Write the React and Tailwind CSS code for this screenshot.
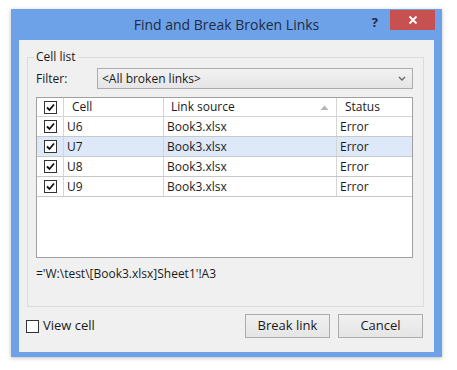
import React from "react";

const font = { fontFamily: '"Open Sans", "Noto Sans", sans-serif' };

function Check({ checked = true }) {
  return (
    <div className="w-[13px] h-[13px] border border-[#333] bg-white flex items-center justify-center">
      {checked && (
        <svg width="11" height="11" viewBox="0 0 11 11">
          <path d="M2 5.5 L4.5 8 L9 2.5" fill="none" stroke="#111" strokeWidth="1.8" />
        </svg>
      )}
    </div>
  );
}

const rows = ["U6", "U7", "U8", "U9"];

export default function App() {
  return (
    <div className="w-[457px] h-[370px] bg-white pt-[9px] pl-[11px]" style={font}>
      <div className="w-[431px] h-[348px] bg-[#6ea2e8] flex flex-col shadow-[0_1px_4px_rgba(0,0,0,0.25)]">
        <div className="h-[31px] grid grid-cols-[1fr_auto_1fr] items-start">
          <div />
          <div className="text-[14px] text-[#1e2b45] leading-[20px] pt-[6px]">Find and Break Broken Links</div>
          <div className="flex justify-end items-start pt-[1px] pr-[7px]">
            <div className="text-[13px] font-bold text-[#1e2b45] leading-[16px] pt-[4px] mr-[12px]">?</div>
            <div className="w-[45px] h-[20px] bg-[#c75050] flex items-center justify-center">
              <svg width="10" height="10" viewBox="0 0 10 10">
                <path d="M1.5 1.5 L8.5 8.5 M8.5 1.5 L1.5 8.5" stroke="#fff" strokeWidth="1.8" />
              </svg>
            </div>
          </div>
        </div>
        <div className="mx-[8px] mb-[5px] flex-1 bg-[#f0f0f0] flex flex-col text-[12px] text-[#1a1a1a]">
          <fieldset className="ml-[8px] mr-[10px] mt-[9px] h-[258px] border border-[#dcdcdc] pl-[8px] pr-[10px]">
            <legend className="ml-[-2px] px-[2px] leading-[16px]">Cell list</legend>
            <div className="flex items-center mt-[3px] h-[21px]">
              <div className="w-[61px]">Filter:</div>
              <div className="flex-1 h-[21px] border border-[#acacac] bg-gradient-to-b from-[#f2f2f2] to-[#e5e5e5] flex items-center pl-[4px] pr-[6px]">
                <span className="flex-1">&lt;All broken links&gt;</span>
                <svg width="8" height="5" viewBox="0 0 8 5">
                  <path d="M1 1 L4 4 L7 1" fill="none" stroke="#666" strokeWidth="1.3" />
                </svg>
              </div>
            </div>
            <div className="mt-[8px] h-[161px] border border-[#a0a0a0] bg-white">
              <div className="flex h-[19px] border-b border-[#d5d5d5] items-center">
                <div className="w-[27px] h-full flex items-center justify-center border-r border-[#d5d5d5]">
                  <Check />
                </div>
                <div className="w-[100px] h-full flex items-center pl-[8px] border-r border-[#d5d5d5]">Cell</div>
                <div className="w-[173px] h-full flex items-center pl-[7px] pr-[7px] border-r border-[#d5d5d5]">
                  <span className="flex-1">Link source</span>
                  <svg width="9" height="5" viewBox="0 0 9 5">
                    <path d="M0.5 5 L4.5 0.5 L8.5 5 Z" fill="#b5b5b5" />
                  </svg>
                </div>
                <div className="flex-1 h-full flex items-center pl-[8px]">Status</div>
              </div>
              {rows.map((r) => (
                <div
                  key={r}
                  className={`flex h-[20px] border-b border-[#c8c8c8] items-center ${r === "U7" ? "bg-[#dde8f8]" : ""}`}
                >
                  <div className="w-[27px] h-full flex items-center justify-center border-r border-[#d5d5d5]">
                    <Check />
                  </div>
                  <div className="w-[100px] h-full flex items-center pl-[3px] border-r border-[#d5d5d5]">{r}</div>
                  <div className="w-[173px] h-full flex items-center pl-[3px] border-r border-[#d5d5d5]">Book3.xlsx</div>
                  <div className="flex-1 h-full flex items-center pl-[3px]">Error</div>
                </div>
              ))}
            </div>
            <div className="mt-[8px] leading-[16px]">='W:\test\[Book3.xlsx]Sheet1'!A3</div>
          </fieldset>
          <div className="flex items-center mt-[7px] pl-[7px] pr-[11px]">
            <div className="flex items-center gap-[4px] flex-1">
              <div className="w-[13px] h-[13px] border border-[#333] bg-white" />
              <span className="text-[13px]">View cell</span>
            </div>
            <div className="w-[85px] h-[24px] border border-[#acacac] bg-gradient-to-b from-[#f0f0f0] to-[#e5e5e5] flex items-center justify-center text-[13px]">
              Break link
            </div>
            <div className="w-[85px] h-[24px] ml-[8px] border border-[#acacac] bg-gradient-to-b from-[#f0f0f0] to-[#e5e5e5] flex items-center justify-center text-[13px]">
              Cancel
            </div>
          </div>
        </div>
      </div>
    </div>
  );
}
